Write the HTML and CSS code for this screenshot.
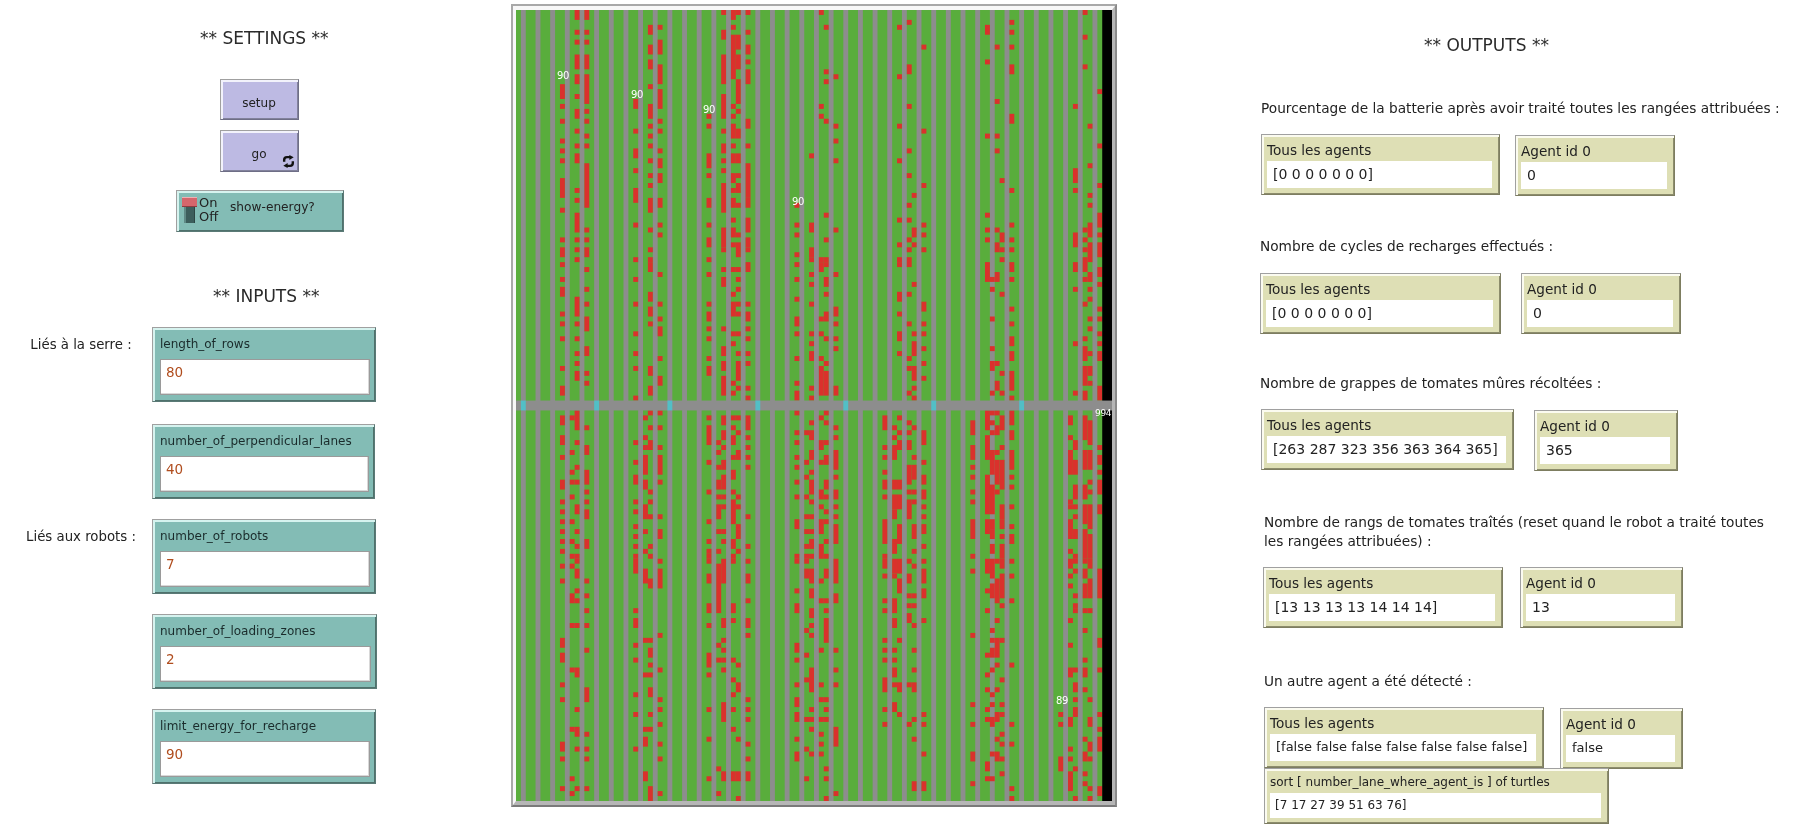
FILE: index.html
```html
<!DOCTYPE html>
<html lang="fr">
<head>
<meta charset="utf-8">
<title>NetLogo</title>
<link rel="stylesheet" href="styles.css">
</head>
<body>
<main class="page">
  <section class="inputs">
    <h2 class="title title-settings">** SETTINGS **</h2>
    <button class="btn btn-setup"><span>setup</span></button>
    <button class="btn btn-go"><span>go</span>
      <svg class="loop" viewBox="0 0 12 12"><path d="M2 6.2V4.6C2 3 3 2 4.6 2H7.4M10 5.8V7.4C10 9 9 10 7.4 10H4.6" fill="none" stroke="#111" stroke-width="2.2"/><path d="M6.8 0 10.8 2 6.8 4.6ZM5.2 7.4 1.2 10 5.2 12Z" fill="#111"/></svg>
    </button>
    <div class="switch">
      <div class="toggle"><i class="cap"></i><i class="slot"></i></div>
      <div class="onoff"><span>On</span><span>Off</span></div>
      <div class="switch-name">show-energy?</div>
    </div>
    <h2 class="title title-inputs">** INPUTS **</h2>
    <div class="in-row in-first">
      <div class="in-note">Liés à la serre :</div>
      <div class="input w-a"><div class="in-label">length_of_rows</div><div class="in-field">80</div></div>
    </div>
    <div class="in-row in-second">
      <div class="in-note"></div>
      <div class="input w-b"><div class="in-label">number_of_perpendicular_lanes</div><div class="in-field">40</div></div>
    </div>
    <div class="in-row">
      <div class="in-note">Liés aux robots :</div>
      <div class="input w-c"><div class="in-label">number_of_robots</div><div class="in-field">7</div></div>
    </div>
    <div class="in-row">
      <div class="in-note"></div>
      <div class="input w-d"><div class="in-label">number_of_loading_zones</div><div class="in-field">2</div></div>
    </div>
    <div class="in-row">
      <div class="in-note"></div>
      <div class="input w-a"><div class="in-label">limit_energy_for_recharge</div><div class="in-field">90</div></div>
    </div>
  </section>

  <section class="world">
    <div class="world-inner">
      <div class="view" id="view">
        <span class="tag tag-1">90</span>
        <span class="tag tag-2">90</span>
        <span class="tag tag-3">90</span>
        <span class="tag tag-4">90</span>
        <span class="tag tag-5">89</span>
        <span class="tag tag-6">994</span>
      </div>
    </div>
  </section>

  <section class="outputs">
    <h2 class="title title-outputs">** OUTPUTS **</h2>

    <p class="note n1">Pourcentage de la batterie après avoir traité toutes les rangées attribuées :</p>
    <div class="mon-row r1">
      <div class="monitor all"><div class="m-label">Tous les agents</div><div class="m-field">[0 0 0 0 0 0 0]</div></div>
      <div class="monitor one"><div class="m-label">Agent id 0</div><div class="m-field">0</div></div>
    </div>

    <p class="note n2">Nombre de cycles de recharges effectués :</p>
    <div class="mon-row r2">
      <div class="monitor all"><div class="m-label">Tous les agents</div><div class="m-field">[0 0 0 0 0 0 0]</div></div>
      <div class="monitor one"><div class="m-label">Agent id 0</div><div class="m-field">0</div></div>
    </div>

    <p class="note n3">Nombre de grappes de tomates mûres récoltées :</p>
    <div class="mon-row r3">
      <div class="monitor all"><div class="m-label">Tous les agents</div><div class="m-field">[263 287 323 356 363 364 365]</div></div>
      <div class="monitor one"><div class="m-label">Agent id 0</div><div class="m-field">365</div></div>
    </div>

    <p class="note n4">Nombre de rangs de tomates traîtés (reset quand le robot a traité toutes<br>les rangées attribuées) :</p>
    <div class="mon-row r4">
      <div class="monitor all"><div class="m-label">Tous les agents</div><div class="m-field">[13 13 13 13 14 14 14]</div></div>
      <div class="monitor one"><div class="m-label">Agent id 0</div><div class="m-field">13</div></div>
    </div>

    <p class="note n5">Un autre agent a été détecté :</p>
    <div class="mon-row r5">
      <div class="monitor all"><div class="m-label">Tous les agents</div><div class="m-field">[false false false false false false false]</div></div>
      <div class="monitor one"><div class="m-label">Agent id 0</div><div class="m-field">false</div></div>
    </div>
    <div class="monitor small"><div class="m-label">sort [ number_lane_where_agent_is ] of turtles</div><div class="m-field">[7 17 27 39 51 63 76]</div></div>
  </section>
</main>
<script src="world.js"></script>
</body>
</html>
```
FILE: styles.css
```css
* { box-sizing: border-box; }
html, body { margin: 0; height: 833px; overflow: hidden; background: #fff; }
body { font-family: "DejaVu Sans", sans-serif; color: #222; }
.page { display: flex; align-items: flex-start; width: 1803px; height: 833px; filter: blur(0.35px); }

.title { margin: 0; font-weight: 400; font-size: 17px; line-height: 20px; white-space: nowrap; color: #2a2a2a; }

/* left column */
.inputs { width: 511px; flex: none; display: flex; flex-direction: column; align-items: flex-start; }
.title-settings { margin: 28px 0 0 200px; }
.title-inputs { margin: 54px 0 0 213px; }

.btn { display: block; position: relative; padding: 0; width: 79px; height: 41px; background: #bdbae3; border: 1px solid; border-color: #a0a0a0 #6e6e86 #6e6e86 #a0a0a0; box-shadow: inset 2px 2px 0 #f2f2fb, inset -1px -1px 0 #82829c; font: 12px/14px "DejaVu Sans", sans-serif; color: #222; }
.btn span { position: absolute; left: 0; right: 1px; top: 16px; text-align: center; }
.btn-setup { margin: 31px 0 0 220px; }
.btn-go { margin: 10px 0 0 220px; height: 42px; }
.btn-go span { top: 16px; }
.loop { position: absolute; right: 3px; bottom: 3px; width: 13px; height: 13px; }

.switch { display: flex; align-items: flex-start; margin: 18px 0 0 176px; width: 168px; height: 42px; background: #83bcb5; border: 1px solid; border-color: #a0a0a0 #5a7a76 #5a7a76 #a0a0a0; box-shadow: inset 2px 2px 0 #d6f3ef, inset -1px -1px 0 #4f716c; }
.toggle { position: relative; width: 15px; height: 26px; margin: 6px 0 0 5px; flex: none; }
.toggle .cap { position: absolute; left: 0; top: 0; width: 15px; height: 10px; background: #d5666c; border-top: 1px solid #efb1b4; border-bottom: 1px solid #8c3b40; }
.toggle .slot { position: absolute; left: 2px; right: 2px; top: 10px; bottom: 0; background: #3c5e5c; border-left: 2px solid #5f8a86; border-right: 1px solid #2c4644; }
.onoff { display: flex; flex-direction: column; margin: 5px 0 0 2px; font-size: 13px; line-height: 14px; width: 31px; flex: none; }
.switch-name { margin: 8px 0 0 0; font: 12.2px/16px "DejaVu Sans", sans-serif; }

.in-row { display: flex; align-items: flex-start; margin-top: 20px; width: 100%; }
.in-first { margin-top: 21px; }
.in-second { margin-top: 22px; }
.in-note { width: 152px; flex: none; padding: 9px 0 0 10px; text-align: center; font-size: 13.3px; line-height: 18px; white-space: nowrap; }
.input { height: 75px; background: #83bcb5; border: 1px solid; border-color: #a0a0a0 #5a7a76 #5a7a76 #a0a0a0; box-shadow: inset 2px 2px 0 #d6f3ef, inset -1px -1px 0 #4f716c; padding: 8px 5px 0 7px; }
.w-a { width: 224px; }
.w-b { width: 223px; }
.w-c { width: 224px; }
.w-d { width: 225px; }
.in-label { font: 12px/16px "DejaVu Sans", sans-serif; color: #1a2b2b; }
.in-field { margin-top: 7px; height: 36px; background: #fff; border: 1px solid #9a9a9a; box-shadow: inset -1px -1px 0 #d8d8d8; padding: 3px 0 0 5px; font: 13.5px/18px "DejaVu Sans", sans-serif; color: #b04d1e; }

/* world */
.world { width: 606px; height: 803px; margin-top: 4px; flex: none; border: 2px solid; border-color: #a8a8a8 #8a8a8a #7a7a7a #a8a8a8; }
.world-inner { width: 100%; height: 100%; border-style: solid; border-width: 4px 3px; border-color: #f7f7f7 #b6b6b6 #b6b6b6 #f7f7f7; }
.view { position: relative; width: 596px; height: 791px; background: #59ad3c; overflow: hidden; }
.grid { display: block; width: 596px; height: 791px; }
.tag { position: absolute; color: #fff; font: 10px/12px "DejaVu Sans", sans-serif; letter-spacing: -0.3px; }
.tag-1 { left: 41px; top: 60px; }
.tag-2 { left: 115px; top: 79px; }
.tag-3 { left: 187px; top: 94px; }
.tag-4 { left: 276px; top: 186px; }
.tag-5 { left: 540px; top: 685px; }
.tag-6 { left: 579px; top: 397px; font-size: 9px; }

/* right column */
.outputs { flex: none; width: 686px; padding-left: 142px; display: flex; flex-direction: column; align-items: flex-start; }
.title-outputs { margin: 35px 0 0 165px; }
.note { margin: 0; font-size: 13.7px; line-height: 19px; white-space: nowrap; }
.n1 { margin: 44px 0 0 2px; }
.n2 { margin: 41px 0 0 1px; }
.n3 { margin: 40px 0 0 1px; }
.n4 { margin: 42px 0 0 5px; }
.n5 { margin: 44px 0 0 5px; }

.mon-row { display: flex; align-items: flex-start; }
.r1 { gap: 15px; margin: 16px 0 0 2px; }
.r1 .all { width: 239px; }
.r1 .one { width: 160px; margin-top: 1px; }
.r2 { gap: 20px; margin: 17px 0 0 1px; }
.r2 .all { width: 241px; }
.r2 .one { width: 160px; }
.r3 { gap: 20px; margin: 16px 0 0 2px; }
.r3 .all { width: 253px; }
.r3 .one { width: 144px; margin-top: 1px; }
.r4 { gap: 17px; margin: 16px 0 0 4px; }
.r4 .all { width: 240px; }
.r4 .one { width: 163px; }
.r5 { gap: 16px; margin: 16px 0 0 5px; }
.r5 .all { width: 280px; }
.r5 .one { width: 123px; margin-top: 1px; }
.r5 .m-field { font-size: 13px; }

.monitor { height: 61px; background: #dedfb5; border: 1px solid; border-color: #a0a0a0 #7d7d60 #7d7d60 #a0a0a0; box-shadow: inset 2px 2px 0 #fbfbf0, inset -1px -1px 0 #8c8c6c; padding: 6px 7px 0 5px; flex: none; }
.m-label { font-size: 13.6px; line-height: 18px; height: 18px; white-space: nowrap; }
.m-field { margin-top: 2px; height: 27px; background: #fff; padding-left: 6px; font-size: 14px; line-height: 26px; white-space: nowrap; }
.small { width: 345px; height: 56px; margin: -1px 0 0 5px; padding-top: 4px; }
.small .m-label { font-size: 12px; }
.small .m-field { height: 25px; margin-top: 2px; font-size: 12px; line-height: 24px; padding-left: 5px; }
```
FILE: world.js
```js
// Patches of the NetLogo world: column -> rows holding a ripe tomato ("start" or "start*length").
var RIPE = {
  9: "15*3 19 22 26 28 30 34*4 40 46 48*2 51 54 56*2 61 63 66 72 76*2 82*2 86*2 90 95*2 99 101 103 105 107 109 112 115 127*2 130*2 136 139 148*2 151 157",
  11: "82 89 93 95 98 103 107 110 112 118*2 124 133 145 155 158",
  12: "0*2 4 6 9*3 13*2 17 20*2 24 27 29*2 36 38 41*4 46 48 50 58*4 63 66 69 71 73*2 81*4 87 92 95 100*2 105 108 110 111 113*2 117 119 124 133*2 141 145*2 149 157",
  14: "0*2 4 6 9*3 13*6 20 22 25 27 31*9 44 46 48*2 52 56 59 62*3 68*2 73 75 84 88*2 93*3 97 99 101*2 107*2 115 118 121 124 129 137*3 146 149 151 157",
  24: "18*2 24 28*2 32 36*3 43 50 54 59 65 69 72 78 87 91 94*2 99 101 104 106 108 110 111*3 121 123*2 128 131 138 142 149",
  26: "82 86 88 90*4 95*2 100*3 105 109 113*3 127 134 145 147*2 154*2",
  27: "3*2 7*2 10*2 15 19*3 23 25 27 30 33 35 38*3 44 48 50 51*2 57*2 60*2 63 72*2 76*2 81 84 87*2 97 99 102 108 110 115*2 127 129*2 132 134 137*2 142 145 157*3",
  29: "3 6*3 11*4 16*4 22 24 28 30*2 33*2 38*2 43 45 53 59 62 64*2 70 74*2 81 84 88 90*4 95 102 105*2 111 113*4 126 133 139 141 144 148 151 158",
  39: "21 23 29*3 33 38*2 43 46*2 50 53 59 61*2 64 66 70 72*2 82 84*4 91 97 103 107 109 110 111 114*2 120*2 124 130*3 134 141 147 155",
  41: "87 89 92 95*2 98 100*3 105 109 112*10 128 131 153 158",
  42: "0 4*2 9*6 17*5 24 27*2 30 32 35*6 44*4 48 52 54*2 64 68*2 71*2 74*4 82*2 85*2 88 91*2 94*3 98 100 105 107 111*5 123*2 127 129 131 133 140*4 154*2",
  44: "0*2 3 5*9 19 21 23*3 27 29*2 33*2 36 38*2 42 44*2 47 52 57 59*3 65 67 75 77 82 84 86*2 90 93*2 97 99*5 107*2 110 111 120*2 123 131 135 138 141 145 154*2",
  45: "0 5*3 9*3 14*5 20 24*2 29*2 33 35*2 39 45 47*3 52 54 56 59 61 65 69 71*4 76 82 85 89*2 98 100 104 105*2 109 132 136*2 147 154*2 159",
  47: "0 4 7*2 10 12*3 22*2 27 31*7 38*2 42*3 46*2 48 51*2 59 61*2 64 66 69 71 76 78 82*3 86 88 90 92 102 108 111 114*2 119 123*2 126 139 141 143 148 151 154*2",
  57: "39 43 45 49 51 54 58 62*2 65 70 75 77*2 81 85 87 90 92 95 98 103*2 110 111 117 120*2 128*2 131 136 139*2 142*2 147 150*2",
  59: "85 91 94 98 102 105 108 110 111 113*2 125 130 135 143 149 155",
  60: "29 43*2 48*2 50 53 55 59 65 67 69*2 76 78 83 85*2 89*2 93 95*3 99 102 105 107*2 110 113*3 117*2 121*2 124 126 133*5 141 143 145 150",
  62: "0 19 21 50 51*2 62 65 70 72*6 82 87*2 91 97*2 100 103*3 108*3 115 119 129 136 139 143 146 148 150",
  63: "3 12 14 22 41 46 50 51 54*2 57 61*2 66 71 73*5 81 83 87 90*2 95*2 98 101 103 107 110 113*2 119 121 123*5 139 141 143 153 155 159",
  65: "13 23 26 30 44 53 60*2 63 66 68 76*2 84 86 89*4 94 97*2 100 102 104*4 111*5 118*2 129 133 136 145*4 158",
  75: "82*3 88 90 93 95*2 98 103*5 110 111*2 114 119 121 127 129 131 135*3 141 144",
  77: "84 86 88*3 95*2 98*3 101*2 107 108*2 111*3 114 119*3 123*2 129 131 133*2 136 140*2",
  78: "3 13 23 30 42 47 50 51 57*2 61 65*2 69 82 85 87*2 95*2 98*3 104 105*3 111*3 115*3 127 136*2 142",
  80: "2 11*2 19 28 33 39 42 46 48 50*2 57 63 70 72 77 83 85 87*2 92*4 97 99*4 111 114*2 118 120 122*2 136 144",
  81: "37 44*2 47 55 65 67*3 72*3 76 78 84 90 92*3 97 99 104*3 109 112 118 120 124 129 133 136*2 143 147 156*2",
  83: "7 24 35 43 45 48 59*2 63 65 68 71 74 85*3 91 94*2 97*2 100 102 104*2 108 111 113*3 117*2 123 142 144 150 156*2",
  93: "83*3 88*3 92 94 97 99 103*4 110 113 126 140 144 150*2 156",
  96: "3*2 10 25 41 44 46 51*3 54 81*4 86*5 94*3 96*6 103*3 111*3 117 121 130 134 137 141 143 152*2 155",
  97: "54 56 62 68 71*2 77 81 83 85 89*5 96*6 103*2 105*2 108*2 111*4 116*3 125 127 129*2 133 138 140 143*2 150 155",
  98: "7 18 25 28 44 47*2 53 54 71 75*2 81 84*2 89 91*5 97 111 115*5 123 127*4 132 137 142*2 147 150*2",
  99: "34 45*2 48 50 57 73 77 82*3 88 91*6 100*3 103*2 106 108*3 111*2 114*5 120 127 135 140 142 146 148 151 154",
  101: "2 4 7 11*2 21*2 36 43 46 48 51*2 54 60 63 66*2 69*2 73*4 78 81*3 85*2 89*4 94 96 100 104 106*2 111 114 119 132 144 148 157 159",
  111: "142 144 151*3",
  113: "82*2 86 89*5 99 100 103*4 109 111*2 114 116 123 128 133*2 143*2 149 151 154*4",
  114: "19 32*3 36 45*3 51*2 56 67 77 87*2 91*3 96*3 100 102 105*2 110 111 113 118 120 121 133 136*2 139 141*2 153 159",
  116: "0 5 11 44 46 48 50*3 54 59 66 68*3 72*4 77*2 82*5 89*4 96*3 100*4 105*6 111 113*2 116*3 121 125 131 133*2 137 147 150*2 154 156",
  117: "23 31 37 39 43*3 47*4 53 54 56 58 62 64 69 72*2 75 83*5 89*4 95 97 100*5 106*5 111*2 115*4 121 139 143*2 148*2 151 157 159",
  119: "16 27 35 41*3 45 47*3 52*2 55 60 62 65 67 69*2 76*3 88 90*2 93 95*3 100*2 113*6 127*2 133 142 145 147*3 157*2"
};
var CYAN = [1, 16, 31, 49, 67, 85, 103];

function rect(x, y, w, h, fill) {
  return '<rect x="' + x + '" y="' + y + '" width="' + w + '" height="' + h + '" fill="' + fill + '"/>';
}

var out = [];
for (var lane = 1; lane < 120; lane += 3) out.push(rect(lane, 0, 1, 160, "#8d8d8d"));
Object.keys(RIPE).forEach(function (col) {
  RIPE[col].split(" ").forEach(function (run) {
    var p = run.split("*");
    out.push(rect(col, p[0], 1, p[1] || 1, "#da312c"));
  });
});
out.push(rect(120, 0, 2, 160, "#000"));
out.push(rect(0, 79, 122, 2, "#8d8d8d"));
CYAN.forEach(function (col) { out.push(rect(col, 79, 1, 2, "#52bfc6")); });

document.getElementById("view").insertAdjacentHTML("afterbegin",
  '<svg class="grid" viewBox="0 0 122 160" preserveAspectRatio="none">' + out.join("") + "</svg>");
```
